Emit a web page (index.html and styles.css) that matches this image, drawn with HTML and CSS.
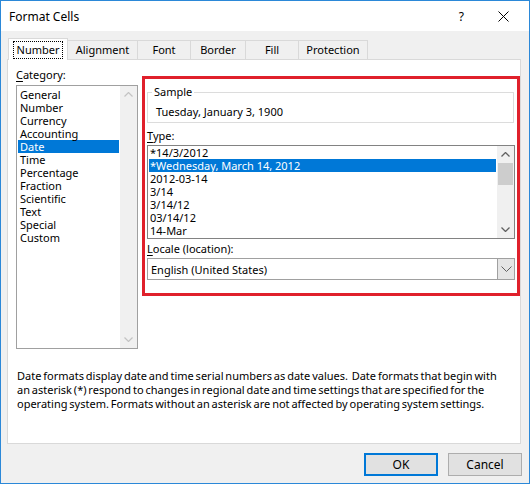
FILE: index.html
```html
<!DOCTYPE html>
<html>
<head>
<meta charset="utf-8">
<link rel="stylesheet" href="styles.css">
</head>
<body>
<div class="window">
  <div class="titlebar">
    <span class="title">Format Cells</span>
    <span class="help">?</span>
    <svg class="close" width="11" height="11" viewBox="0 0 11 11"><path d="M0.5 0.5 L10.5 10.5 M10.5 0.5 L0.5 10.5" stroke="#000" stroke-width="1" fill="none"/></svg>
  </div>
  <div class="body">
    <div class="tabs">
      <div class="tab sel t-number"><span class="focus">Number</span></div>
      <div class="tab t-align">Alignment</div>
      <div class="tab t-font">Font</div>
      <div class="tab t-border">Border</div>
      <div class="tab t-fill">Fill</div>
      <div class="tab t-prot">Protection</div>
    </div>
    <div class="panel">
      <div class="row">
        <div class="left">
          <div class="label cat-label"><u>C</u>ategory:</div>
          <div class="listbox cat">
            <div class="items">
              <div class="item">General</div>
              <div class="item">Number</div>
              <div class="item">Currency</div>
              <div class="item">Accounting</div>
              <div class="item selected">Date</div>
              <div class="item">Time</div>
              <div class="item">Percentage</div>
              <div class="item">Fraction</div>
              <div class="item">Scientific</div>
              <div class="item">Text</div>
              <div class="item">Special</div>
              <div class="item">Custom</div>
            </div>
            <div class="vscroll disabled">
              <div class="sbtn"><svg width="9" height="5" viewBox="0 0 9 5"><polyline points="0.5,4.5 4.5,0.5 8.5,4.5" fill="none" stroke="#c3c3c3" stroke-width="1.2"/></svg></div>
              <div class="sbtn"><svg width="9" height="5" viewBox="0 0 9 5"><polyline points="0.5,0.5 4.5,4.5 8.5,0.5" fill="none" stroke="#c3c3c3" stroke-width="1.2"/></svg></div>
            </div>
          </div>
        </div>
        <div class="redbox">
          <fieldset class="sample">
            <legend>Sample</legend>
            <div class="sample-text">Tuesday, January 3, 1900</div>
          </fieldset>
          <div class="label type-label"><u>T</u>ype:</div>
          <div class="listbox type">
            <div class="items">
              <div class="item">*14/3/2012</div>
              <div class="item selected">*Wednesday, March 14, 2012</div>
              <div class="item">2012-03-14</div>
              <div class="item">3/14</div>
              <div class="item">3/14/12</div>
              <div class="item">03/14/12</div>
              <div class="item">14-Mar</div>
            </div>
            <div class="vscroll">
              <div class="sbtn"><svg width="9" height="5" viewBox="0 0 9 5"><polyline points="0.5,4.5 4.5,0.5 8.5,4.5" fill="none" stroke="#606060" stroke-width="1.3"/></svg></div>
              <div class="thumb"></div>
              <div class="track"></div>
              <div class="sbtn"><svg width="9" height="5" viewBox="0 0 9 5"><polyline points="0.5,0.5 4.5,4.5 8.5,0.5" fill="none" stroke="#606060" stroke-width="1.3"/></svg></div>
            </div>
          </div>
          <div class="label locale-label"><u>L</u>ocale (location):</div>
          <div class="combo">
            <span class="combo-text">English (United States)</span>
            <span class="combo-btn"><svg width="11" height="6" viewBox="0 0 11 6"><polyline points="0.5,0.5 5.5,5.5 10.5,0.5" fill="none" stroke="#606060" stroke-width="1"/></svg></span>
          </div>
        </div>
      </div>
      <p class="desc">Date formats display date and time serial numbers as date values.&nbsp; Date formats that begin with<br>an asterisk (*) respond to changes in regional date and time settings that are specified for the<br>operating system. Formats without an asterisk are not affected by operating system settings.</p>
    </div>
    <div class="buttons">
      <button class="btn default">OK</button>
      <button class="btn">Cancel</button>
    </div>
  </div>
</div>
</body>
</html>
```
FILE: styles.css
```css
* { box-sizing: border-box; }
html, body { margin: 0; padding: 0; }
body {
  font-family: "Noto Sans", "Open Sans", sans-serif;
  font-size: 11px;
  color: #000;
  background: #fff;
}
.window {
  width: 530px;
  height: 484px;
  border: 1px solid #2b88d8;
  display: flex;
  flex-direction: column;
  background: #f0f0f0;
}
.titlebar {
  height: 30px;
  background: #fff;
  display: flex;
  align-items: center;
  flex: none;
}
.title {
  padding-left: 8px;
  font-size: 12px;
  flex: 1;
}
.help {
  font-size: 12px;
  margin-right: 34px;
}
.close { margin-right: 20px; }

.body {
  flex: 1;
  padding: 7px 8px 0 6px;
}
.tabs {
  display: flex;
  align-items: flex-end;
  height: 21px;
  padding-left: 1px;
}
.tab {
  height: 19px;
  border: 1px solid #d9d9d9;
  border-bottom: none;
  background: #f0f0f0;
  display: flex;
  align-items: center;
  justify-content: center;
  margin-left: -1px;
  line-height: 14px;
}
.tab.sel {
  height: 22px;
  margin-bottom: -1px;
  background: #fff;
  position: relative;
  z-index: 1;
  margin-left: 0;
}
.focus {
  outline: 1px dotted #000;
  outline-offset: 0;
  padding: 1px 3px;
}
.t-number { width: 60px; }
.t-align { width: 71px; }
.t-font { width: 54px; }
.t-border { width: 56px; }
.t-fill { width: 54px; }
.t-prot { width: 70px; }

.panel {
  height: 385px;
  background: #fff;
  border: 1px solid #d9d9d9;
  padding: 8px 0 0 8px;
}
.row {
  display: flex;
  align-items: flex-start;
  gap: 4px;
}
.left { width: 122px; }
.label {
  line-height: 14px;
  height: 14px;
  white-space: nowrap;
}
.label u { text-underline-offset: 2px; text-decoration-thickness: 1px; }
.cat-label { margin-bottom: 3px; }

.listbox {
  border: 1px solid #828282;
  display: flex;
  background: #fff;
}
.listbox.cat {
  height: 264px;
  border-color: #a0a0a0;
}
.items {
  flex: 1;
  min-width: 0;
}
.cat .items { padding-top: 2px; }
.item {
  height: 13px;
  line-height: 13px;
  padding-left: 2px;
  margin-left: 1px;
  margin-right: 1px;
  white-space: nowrap;
}
.item.selected {
  background: #0078d7;
  color: #fff;
}
.vscroll {
  width: 17px;
  background: #f0f0f0;
  display: flex;
  flex-direction: column;
  justify-content: space-between;
}
.sbtn {
  height: 17px;
  display: flex;
  align-items: center;
  justify-content: center;
}
.thumb {
  height: 22px;
  background: #cdcdcd;
  margin: 0 1px;
}
.track { flex: 1; }

.redbox {
  margin-top: 8px;
  width: 378px;
  height: 220px;
  border: 3px solid #e0202b;
  padding: 6px 2px 0 2px;
}
.sample {
  margin: 0 1px 0 0;
  border: 1px solid #dcdcdc;
  padding: 0 0 3px 4px;
  min-width: 0;
}
.sample legend {
  padding: 0 2px;
  line-height: 14px;
}
.sample-text {
  margin-top: 6px;
  line-height: 14px;
  padding-left: 4px;
}
.type-label { margin-top: 6px; margin-bottom: 2px; }
.listbox.type { height: 94px; }
.type .item { padding-left: 1px; margin-left: 1px; margin-right: 1px; }
.locale-label { margin-top: 3px; margin-bottom: 2px; }
.combo {
  height: 22px;
  border: 1px solid #a0a0a0;
  display: flex;
  align-items: stretch;
  background: #fff;
}
.combo-text {
  flex: 1;
  padding-left: 3px;
  display: flex;
  align-items: center;
}
.combo-btn {
  width: 17px;
  background: #e5e5e5;
  border-left: 1px solid #a0a0a0;
  display: flex;
  align-items: center;
  justify-content: center;
}

.desc {
  margin: 20px 0 0 1px;
  line-height: 14px;
  white-space: nowrap;
  word-spacing: -1px;
}

.buttons {
  display: flex;
  justify-content: flex-end;
  gap: 10px;
  margin-top: 9px;
  margin-right: -1px;
}
.btn {
  width: 74px;
  height: 23px;
  font-family: inherit;
  font-size: 12px;
  background: #e1e1e1;
  border: 1px solid #adadad;
  padding: 0;
  color: #000;
}
.btn.default {
  border: 2px solid #0078d7;
}
```
